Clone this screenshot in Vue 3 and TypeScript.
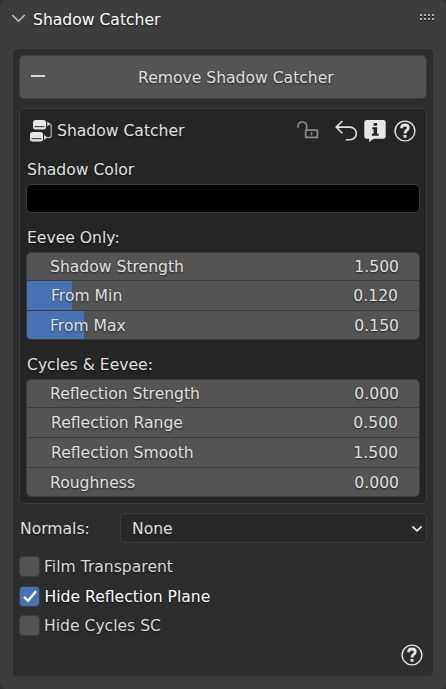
<script setup lang="ts">
import { ref } from 'vue'

interface NumberField {
  label: string
  value: string
  fill: number
  height: number
  shift?: number
  valueShift?: number
}

interface Toggle {
  label: string
  checked: boolean
}

const eevee: NumberField[] = [
  { label: 'Shadow Strength', value: '1.500', fill: 0, height: 27 },
  { label: 'From Min', value: '0.120', fill: 45, height: 30, shift: 1, valueShift: 1 },
  { label: 'From Max', value: '0.150', fill: 57, height: 29 },
]

const cycles: NumberField[] = [
  { label: 'Reflection Strength', value: '0.000', fill: 0, height: 27 },
  { label: 'Reflection Range', value: '0.500', fill: 0, height: 30, shift: 1, valueShift: 1 },
  { label: 'Reflection Smooth', value: '1.500', fill: 0, height: 30, shift: 1, valueShift: 1 },
  { label: 'Roughness', value: '0.000', fill: 0, height: 29 },
]

const groups = [
  { title: 'Eevee Only:', name: 'eevee', fields: eevee },
  { title: 'Cycles & Eevee:', name: 'cycles', fields: cycles },
]

const toggles = ref<Toggle[]>([
  { label: 'Film Transparent', checked: false },
  { label: 'Hide Reflection Plane', checked: true },
  { label: 'Hide Cycles SC', checked: false },
])
</script>

<template>
  <main class="panel">
    <header class="panel-head">
      <svg class="chevron" width="16" height="12" viewBox="0 0 16 12"><path d="M1.300 2 7.500 8.300 13.700 2" /></svg>
      <h1>Shadow Catcher</h1>
      <svg class="grip" width="16" height="8" viewBox="0 0 16 8">
        <g v-for="x in 4" :key="x">
          <rect v-for="y in 2" :key="y" :x="x * 4 - 4" :y="y * 4 - 4" width="2" height="3" fill="#111" />
          <rect v-for="y in 2" :key="'l' + y" :x="x * 4 - 4" :y="y * 4 - 4" width="2" height="2" fill="#b0b0b0" />
        </g>
      </svg>
    </header>

    <section class="box">
      <button class="remove">
        <i class="minus"></i>
        <span>Remove Shadow Catcher</span>
      </button>

      <section class="settings">
        <div class="title-row">
          <svg class="nodes" width="22" height="22" viewBox="0 0 22 22">
            <rect x="3" y="0" width="13" height="9.400" rx="2.500" fill="#e6e6e6" />
            <path d="M4.500 6.700h10" stroke="#252525" stroke-width="1" />
            <rect x="0" y="12" width="13" height="9.500" rx="2.500" fill="#e6e6e6" />
            <path d="M1.500 18.700h10" stroke="#252525" stroke-width="1" />
            <path d="M18 4h1.200Q21.200 4 21.200 6v9.500q0 2-2 2h-4" fill="none" stroke="#a8a8a8" stroke-width="1.300" />
            <path d="M17.300 1.200v5.400l2.500-2.700zM14.200 14.800v5.400l2.500-2.700z" fill="#e6e6e6" />
          </svg>
          <h2>Shadow Catcher</h2>
          <svg class="lock" width="22" height="18" viewBox="0 0 22 18">
            <path d="M1.100 6.800V5.300Q1.100 1 5.400 1T9.700 5.300V9M8.700 9.200H20.400V16.400H8.700Z" />
            <path d="M14.500 11.400v3" />
          </svg>
          <svg class="undo" width="22" height="22" viewBox="0 0 22 22">
            <path d="M7.300 1 1.200 7.100 7.300 13.200M1.400 7.100H15a6.300 6.300 0 0 1 0 12.700h-4.200" />
          </svg>
          <svg class="info" width="22" height="23" viewBox="0 0 22 23">
            <path d="M2.800 0h16.400q2.500 0 2.500 2.500v13.700q0 2.500-2.500 2.500H9.300L5.200 22.300v-3.600H2.800q-2.500 0-2.500-2.500V2.500q0-2.500 2.500-2.500z" fill="#e6e6e6" />
            <path d="M9.600 3h3.500v2.700H9.600zM8.300 7.300h4.800v6.500h1.500v1.900H7.900v-1.900h1.700V9.200H8.300z" fill="#252525" />
          </svg>
          <svg class="help" width="22" height="22" viewBox="0 0 22 22">
            <circle cx="11" cy="11" r="9.900" />
            <path d="M7.600 8.200V7.500Q7.800 5 11 5t3.300 2.800q0 1.600-1.700 2.600-1.600.8-1.600 3" />
            <rect x="9.500" y="15" width="3" height="2.700" />
          </svg>
        </div>

        <div class="color-label">Shadow Color</div>
        <div class="swatch"></div>

        <template v-for="g in groups" :key="g.name">
          <h3 :class="g.name">{{ g.title }}</h3>
          <div class="fields">
            <div v-for="f in g.fields" :key="f.label" class="field"
              :style="{ height: f.height + 'px', '--fill': f.fill + 'px' }">
              <span :style="{ marginLeft: (f.shift ?? 0) + 'px' }">{{ f.label }}</span>
              <span :style="{ marginRight: (f.valueShift ?? 0) + 'px' }">{{ f.value }}</span>
            </div>
          </div>
        </template>
      </section>

      <div class="normals">
        <span>Normals:</span>
        <div class="select">
          <span>None</span>
          <svg width="12" height="8" viewBox="0 0 12 8"><path d="M1.500 1.500 6 5.800 10.500 1.500" /></svg>
        </div>
      </div>

      <div class="toggles">
        <label v-for="t in toggles" :key="t.label" class="toggle" :class="{ on: t.checked }"
          @click="t.checked = !t.checked">
          <span class="check">
            <svg v-if="t.checked" width="20" height="20" viewBox="0 0 20 20"><path d="M4 9.700 8 13.700 16 4.300" /></svg>
          </span>
          <span>{{ t.label }}</span>
        </label>
      </div>

      <footer>
        <svg class="help" width="22" height="22" viewBox="0 0 22 22">
          <circle cx="11" cy="11" r="9.900" />
          <path d="M7.600 8.200V7.500Q7.800 5 11 5t3.300 2.800q0 1.600-1.700 2.600-1.600.8-1.600 3" />
          <rect x="9.500" y="15" width="3" height="2.700" />
        </svg>
      </footer>
    </section>
  </main>
</template>

<style>
body {
  background: #303030;
}
</style>

<style scoped>
* {
  box-sizing: border-box;
}
.panel {
  width: 446px;
  height: 689px;
  padding: 0 13px;
  background: #3d3d3d;
  border-radius: 6px;
  color: #e0e0e0;
  font: 15.6px/20px "DejaVu Sans", sans-serif;
  text-shadow: 0 1px 2px rgba(0, 0, 0, 0.65);
  white-space: nowrap;
}
h1, h2, h3 {
  margin: 0;
  font: inherit;
}
svg {
  display: block;
  flex: none;
}
.panel-head {
  display: flex;
  height: 49px;
  padding-top: 10px;
}
.panel-head h1 {
  margin-left: 6px;
  color: #fff;
}
.chevron {
  margin: 3px 0 0 -2px;
  fill: none;
  stroke: #c4c4c4;
  stroke-width: 1.500;
}
.grip {
  margin: 4px -3px 0 auto;
}
.box {
  height: 628px;
  padding: 6px 6px 0;
  background: #2d2d2d;
  border-radius: 5px;
  border-bottom: 1px solid #383838;
}
.remove {
  display: flex;
  align-items: center;
  width: 408px;
  height: 44px;
  padding: 0;
  border: 1px solid #3d3d3d;
  border-radius: 5px;
  background: #545454;
  color: inherit;
  font: inherit;
  text-shadow: inherit;
}
.remove span {
  margin: 2px 0 0 93px;
}
.minus {
  width: 14px;
  height: 2px;
  margin: -2px 0 0 11px;
  background: #dadada;
}
.settings {
  height: 396px;
  margin-top: 9px;
  padding: 0 6px;
  border: 1px solid #3d3d3d;
  border-radius: 5px;
  background: #252525;
}
.title-row {
  display: flex;
  height: 51px;
  padding: 11px 0 0 4px;
}
.title-row h2 {
  margin: 1px 0 0 5px;
}
.lock {
  margin: 1px 0 0 auto;
  fill: none;
  stroke: #8b8b8b;
  stroke-width: 1.700;
}
.undo {
  margin-left: 16px;
  fill: none;
  stroke: #e0e0e0;
  stroke-width: 1.600;
}
.info {
  margin-left: 7px;
}
.help {
  fill: none;
  stroke: #e6e6e6;
  stroke-width: 1.400;
}
.help path {
  stroke-width: 2.800;
}
.help rect {
  fill: #e6e6e6;
  stroke: none;
}
.title-row .help {
  margin: 0 4px 0 8px;
}
.color-label {
  height: 24px;
  margin-left: 1px;
}
.swatch {
  height: 29px;
  border: 1px solid #3d3d3d;
  border-radius: 5px;
  background: #000;
}
h3 {
  height: 24px;
  margin: 15px 0 0 1px;
}
.fields {
  border: 1px solid #3d3d3d;
  border-radius: 5px;
  overflow: hidden;
}
.field {
  display: flex;
  align-items: center;
  justify-content: space-between;
  padding: 0 20px 0 23px;
  background: linear-gradient(to right, #4772b3 var(--fill), #545454 var(--fill));
}
.field + .field {
  border-top: 1px solid #3d3d3d;
}
.field:last-child {
  padding-top: 2px;
}
.normals {
  display: flex;
  align-items: center;
  justify-content: space-between;
  height: 30px;
  margin-top: 9px;
  padding-left: 1px;
}
.normals span {
  margin-top: 2px;
}
.select {
  display: flex;
  align-items: center;
  justify-content: space-between;
  width: 307px;
  height: 30px;
  padding: 0 3px 0 11px;
  border: 1px solid #3d3d3d;
  border-radius: 5px;
  background: #282828;
}
.select svg {
  margin-top: 2px;
  fill: none;
  stroke: #e6e6e6;
  stroke-width: 1.800;
}
.toggles {
  display: grid;
  gap: 9px;
  margin-top: 13px;
}
.toggle {
  display: flex;
  align-items: center;
  gap: 4px;
  height: 21px;
  color: #d9d9d9;
}
.toggle:last-child {
  margin-top: -1px;
}
.toggle.on {
  color: #fff;
}
.toggle.on > span:last-child {
  margin-left: 0.500px;
}
.check {
  width: 21px;
  height: 21px;
  border: 1px solid #3d3d3d;
  border-radius: 4px;
  background: #545454;
}
.on .check {
  background: #4772b3;
}
.check svg {
  fill: none;
  stroke: #fff;
  stroke-width: 2.300;
}
footer {
  display: flex;
  justify-content: flex-end;
  margin: 8px 4px 0 0;
}
</style>
